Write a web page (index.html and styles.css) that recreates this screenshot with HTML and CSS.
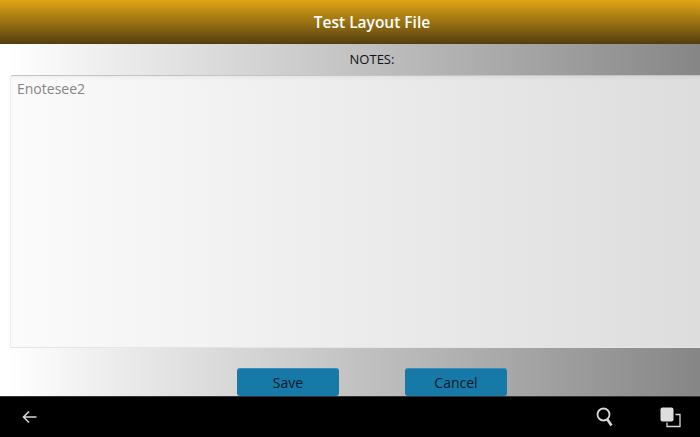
FILE: index.html
```html
<!DOCTYPE html>
<html>
<head>
<meta name="viewport" content="width=device-width, initial-scale=1">
<title>Test Layout File</title>
<link rel="stylesheet" href="styles.css">
</head>
<body>
  <div class="header">Test Layout File</div>
  <div class="content">
    <div class="notes-label">NOTES:</div>
    <div class="notes-box">Enotesee2</div>
    <div class="buttons">
      <button type="button" class="btn">Save</button>
      <button type="button" class="btn">Cancel</button>
    </div>
  </div>
  <div class="toolbar">
    <svg class="back-icon" width="15" height="14" viewBox="0 0 15 14">
      <path d="M7 1.5 L1.5 7 L7 12.5 M1.5 7 H14.5" fill="none" stroke="#d8d8d8" stroke-width="1.6"/>
    </svg>
    <div class="toolbar-right">
      <svg width="17" height="20" viewBox="0 0 17 20">
        <circle cx="7.5" cy="7.5" r="6" fill="none" stroke="#d8d8d8" stroke-width="1.8"/>
        <path d="M11 12 L15.5 18.5" fill="none" stroke="#d8d8d8" stroke-width="2.6"/>
      </svg>
      <svg width="22" height="21" viewBox="0 0 22 21">
        <path d="M15.5 7.5 H20 V19.5 H7 V15.5" fill="none" stroke="#d8d8d8" stroke-width="1.3"/>
        <rect x="0.5" y="0.5" width="13" height="14" rx="2" fill="#dedede"/>
      </svg>
    </div>
  </div>
</body>
</html>
```
FILE: styles.css
```css
html, body {
  margin: 0;
  height: 100%;
}

body {
  width: 700px;
  height: 437px;
  display: flex;
  flex-direction: column;
  overflow: hidden;
  font-family: "Open Sans", sans-serif;
}

.header {
  height: 44px;
  line-height: 44px;
  flex: none;
  padding-left: 44px;
  text-align: center;
  color: #fff;
  font-size: 15.5px;
  font-weight: 600;
  background: linear-gradient(to bottom, #e2a515, #523f0f);
}

.content {
  flex: 1;
  display: flex;
  flex-direction: column;
  padding-left: 10px;
  background: linear-gradient(to right, #ffffff 1%, #868686 100%);
}

.notes-label {
  height: 31px;
  line-height: 30px;
  padding-left: 34px;
  text-align: center;
  font-size: 13px;
  color: #111;
}

.notes-box {
  box-sizing: border-box;
  height: 273px;
  padding: 3px 6px;
  border-top: 1px solid #c4c4c4;
  border-left: 1px solid #ebebeb;
  border-bottom: 1px solid #e4e4e4;
  border-top-left-radius: 3px;
  font-size: 14px;
  color: #858585;
  background: linear-gradient(to right, #fbfbfb, #dddddd);
  box-shadow: inset 0 6px 6px -6px rgba(0, 0, 0, 0.08);
}

.buttons {
  display: flex;
  justify-content: center;
  gap: 66px;
  margin-top: 20px;
  padding-left: 34px;
}

.btn {
  width: 102px;
  height: 28px;
  padding: 0;
  border: none;
  border-top: 1px solid #3a8fb8;
  border-radius: 3px;
  background-color: #1679a8;
  color: #0a1a28;
  font-family: inherit;
  font-size: 14px;
}

.toolbar {
  box-sizing: border-box;
  height: 41px;
  flex: none;
  display: flex;
  align-items: center;
  justify-content: space-between;
  padding: 0 18px 0 22px;
  background-color: #000;
  border-top: 1px solid #333;
}

.toolbar-right {
  display: flex;
  align-items: center;
  gap: 47px;
}
```
